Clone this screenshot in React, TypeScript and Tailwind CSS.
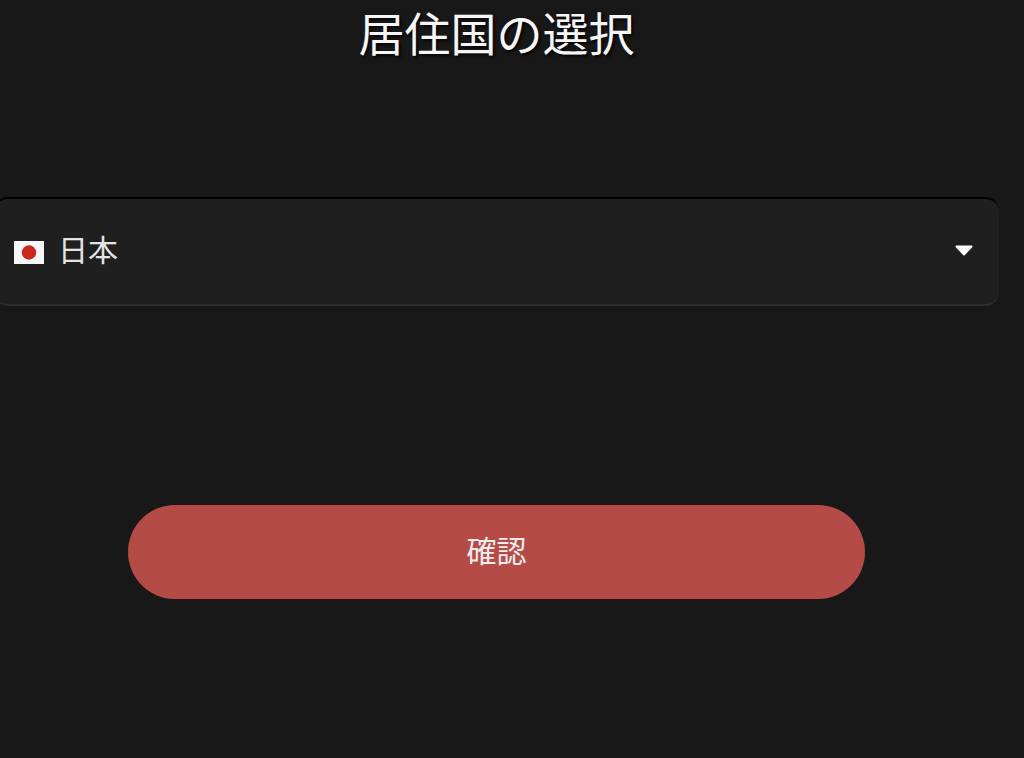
import React from 'react';

const App: React.FC = () => {
  return (
    <div className="h-[758px] w-[1024px] overflow-hidden bg-[#181818] font-['Liberation_Sans','Noto_Sans_CJK_JP',sans-serif]">
      <div className="flex w-[993px] flex-col items-center">
        {/* Title */}
        <h1 className="h-[70px] text-[46px] font-normal leading-[70px] text-[#f6f6f6] [text-shadow:2px_2px_3px_rgba(0,0,0,0.8)]">
          居住国の選択
        </h1>

        {/* Country select */}
        <div className="mt-[127px] flex h-[109px] w-[1005px] shrink-0 items-center justify-between rounded-[14px] border-t-2 border-b-2 border-t-black border-b-[#2e2e2e] bg-[#1f1f1f] pl-5 pr-[26px]">
          <div className="flex items-center gap-[14px]">
            <svg width="30" height="23" viewBox="0 0 30 23" className="mt-[1px]">
              <rect width="30" height="23" fill="#f7f7f7" />
              <circle cx="15" cy="11.5" r="7.2" fill="#c8281e" />
            </svg>
            <span className="mt-[-2px] text-[30px] font-normal leading-none text-[#e4e4e4]">日本</span>
          </div>
          <svg width="18" height="11" viewBox="0 0 18 11" className="mt-[-2px]">
            <path d="M1.5 1.5H16.5L9 9.5Z" fill="#fff" stroke="#fff" strokeWidth="2" strokeLinejoin="round" />
          </svg>
        </div>

        {/* Confirm */}
        <button className="mt-[199px] flex h-[94px] w-[737px] items-center justify-center rounded-full bg-[#b54b46] pb-[1px] text-[30px] font-normal text-[#ececec]">
          確認
        </button>
      </div>
    </div>
  );
};

export default App;
